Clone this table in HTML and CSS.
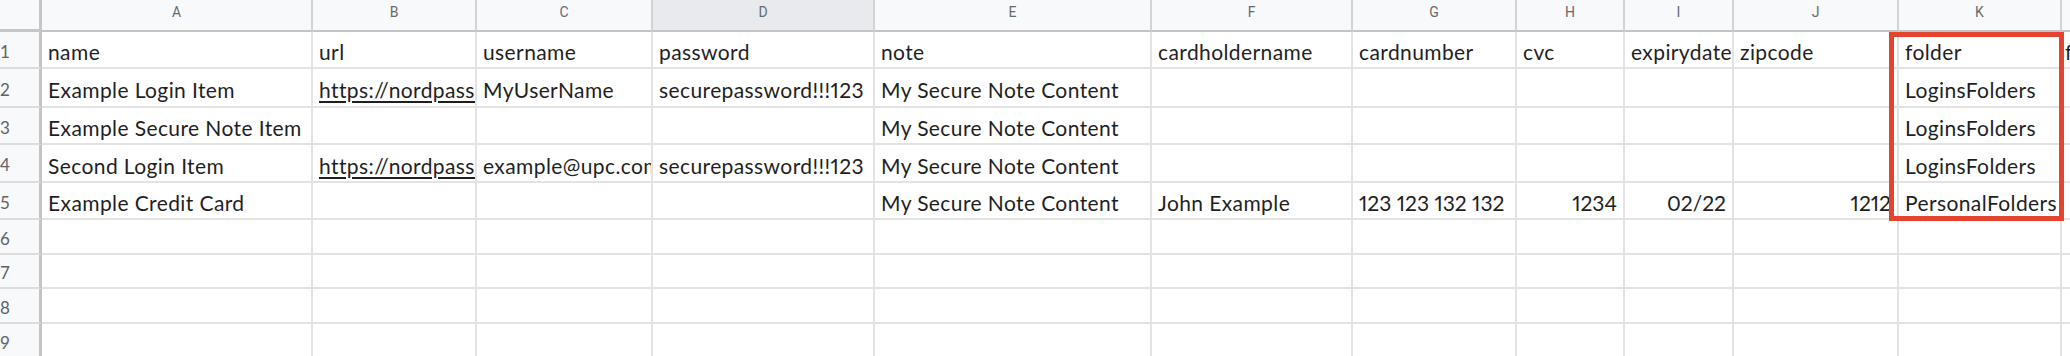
FILE: index.html
```html
<!DOCTYPE html>
<html>
<head>
<meta charset="utf-8">
<link rel="stylesheet" href="styles.css">
</head>
<body>
<div class="sheet">
  <div class="corner"></div>
  <div class="colhdr">A</div>
  <div class="colhdr">B</div>
  <div class="colhdr">C</div>
  <div class="colhdr sel">D</div>
  <div class="colhdr">E</div>
  <div class="colhdr">F</div>
  <div class="colhdr">G</div>
  <div class="colhdr">H</div>
  <div class="colhdr">I</div>
  <div class="colhdr">J</div>
  <div class="colhdr">K</div>
  <div class="colhdr">L</div>

  <div class="rowhdr">1</div>
  <div class="cell">name</div>
  <div class="cell">url</div>
  <div class="cell">username</div>
  <div class="cell">password</div>
  <div class="cell">note</div>
  <div class="cell">cardholdername</div>
  <div class="cell">cardnumber</div>
  <div class="cell">cvc</div>
  <div class="cell">expirydate</div>
  <div class="cell">zipcode</div>
  <div class="cell">folder</div>
  <div class="cell edge">favorite</div>

  <div class="rowhdr">2</div>
  <div class="cell">Example Login Item</div>
  <div class="cell"><span class="link">https://nordpass.com</span></div>
  <div class="cell">MyUserName</div>
  <div class="cell">securepassword!!!123</div>
  <div class="cell">My Secure Note Content</div>
  <div class="cell"></div>
  <div class="cell"></div>
  <div class="cell"></div>
  <div class="cell"></div>
  <div class="cell"></div>
  <div class="cell">LoginsFolders</div>
  <div class="cell edge"></div>

  <div class="rowhdr">3</div>
  <div class="cell">Example Secure Note Item</div>
  <div class="cell"></div>
  <div class="cell"></div>
  <div class="cell"></div>
  <div class="cell">My Secure Note Content</div>
  <div class="cell"></div>
  <div class="cell"></div>
  <div class="cell"></div>
  <div class="cell"></div>
  <div class="cell"></div>
  <div class="cell">LoginsFolders</div>
  <div class="cell edge"></div>

  <div class="rowhdr">4</div>
  <div class="cell">Second Login Item</div>
  <div class="cell"><span class="link">https://nordpass.com</span></div>
  <div class="cell">example@upc.com</div>
  <div class="cell">securepassword!!!123</div>
  <div class="cell">My Secure Note Content</div>
  <div class="cell"></div>
  <div class="cell"></div>
  <div class="cell"></div>
  <div class="cell"></div>
  <div class="cell"></div>
  <div class="cell">LoginsFolders</div>
  <div class="cell edge"></div>

  <div class="rowhdr">5</div>
  <div class="cell">Example Credit Card</div>
  <div class="cell"></div>
  <div class="cell"></div>
  <div class="cell"></div>
  <div class="cell">My Secure Note Content</div>
  <div class="cell">John Example</div>
  <div class="cell digits">123 123 132 132</div>
  <div class="cell num">1234</div>
  <div class="cell num">02/22</div>
  <div class="cell num">1212</div>
  <div class="cell">PersonalFolders</div>
  <div class="cell edge"></div>

  <div class="rowhdr">6</div>
  <div class="cell"></div><div class="cell"></div><div class="cell"></div><div class="cell"></div>
  <div class="cell"></div><div class="cell"></div><div class="cell"></div><div class="cell"></div>
  <div class="cell"></div><div class="cell"></div><div class="cell"></div><div class="cell edge"></div>

  <div class="rowhdr">7</div>
  <div class="cell"></div><div class="cell"></div><div class="cell"></div><div class="cell"></div>
  <div class="cell"></div><div class="cell"></div><div class="cell"></div><div class="cell"></div>
  <div class="cell"></div><div class="cell"></div><div class="cell"></div><div class="cell edge"></div>

  <div class="rowhdr">8</div>
  <div class="cell"></div><div class="cell"></div><div class="cell"></div><div class="cell"></div>
  <div class="cell"></div><div class="cell"></div><div class="cell"></div><div class="cell"></div>
  <div class="cell"></div><div class="cell"></div><div class="cell"></div><div class="cell edge"></div>

  <div class="rowhdr">9</div>
  <div class="cell"></div><div class="cell"></div><div class="cell"></div><div class="cell"></div>
  <div class="cell"></div><div class="cell"></div><div class="cell"></div><div class="cell"></div>
  <div class="cell"></div><div class="cell"></div><div class="cell"></div><div class="cell edge"></div>

  <div class="highlight"></div>
</div>
</body>
</html>
```

FILE: styles.css
```css
html, body {
  margin: 0;
  padding: 0;
  background: #ffffff;
  overflow: hidden;
}

.sheet {
  position: relative;
  display: grid;
  grid-template-columns: 42px 271px 164px 176px 222px 277px 201px 164px 108px 109px 165px 163px 40px;
  grid-template-rows: 32px 37px 39px 37px 38px 37px 35px 34px 35px 35px;
  width: 2110px;
  font-family: "Lato", "Open Sans", sans-serif;
}

.corner {
  box-sizing: border-box;
  background: #f8f9fa;
  border-right: 3px solid #c4c7c5;
  border-bottom: 3px solid #c4c7c5;
}

.colhdr {
  box-sizing: border-box;
  display: flex;
  justify-content: center;
  align-items: flex-start;
  padding-top: 4px;
  background: #f8f9fa;
  border-right: 2px solid #d3d3d3;
  border-bottom: 2px solid #c4c4c4;
  font-family: "Roboto", "Liberation Sans", sans-serif;
  font-size: 14px;
  color: #666a6e;
}

.colhdr.sel {
  background: #e8eaed;
}

.rowhdr {
  box-sizing: border-box;
  display: flex;
  align-items: center;
  padding-top: 3px;
  padding-left: 0;
  background: #f8f9fa;
  border-right: 3px solid #c4c4c4;
  border-bottom: 2px solid #dcdcdc;
  font-size: 17px;
  color: #5f6368;
}

.cell {
  box-sizing: border-box;
  display: flex;
  align-items: center;
  padding: 4px 6px 0 6px;
  border-right: 2px solid #e3e3e3;
  border-bottom: 2px solid #e3e3e3;
  font-size: 21px;
  letter-spacing: 0.4px;
  font-variant-numeric: proportional-nums;
  color: #1f1f1f;
  white-space: nowrap;
  overflow: hidden;
}

.cell.digits {
  letter-spacing: 0;
}

.cell.num {
  justify-content: flex-end;
  letter-spacing: 0;
}

.cell.edge {
  padding-left: 3px;
}

.link {
  text-decoration: underline;
  text-underline-offset: 3px;
}

.highlight {
  position: absolute;
  left: 1889px;
  top: 32px;
  width: 175px;
  height: 189px;
  box-sizing: border-box;
  border: 5px solid #e3432f;
}
```
